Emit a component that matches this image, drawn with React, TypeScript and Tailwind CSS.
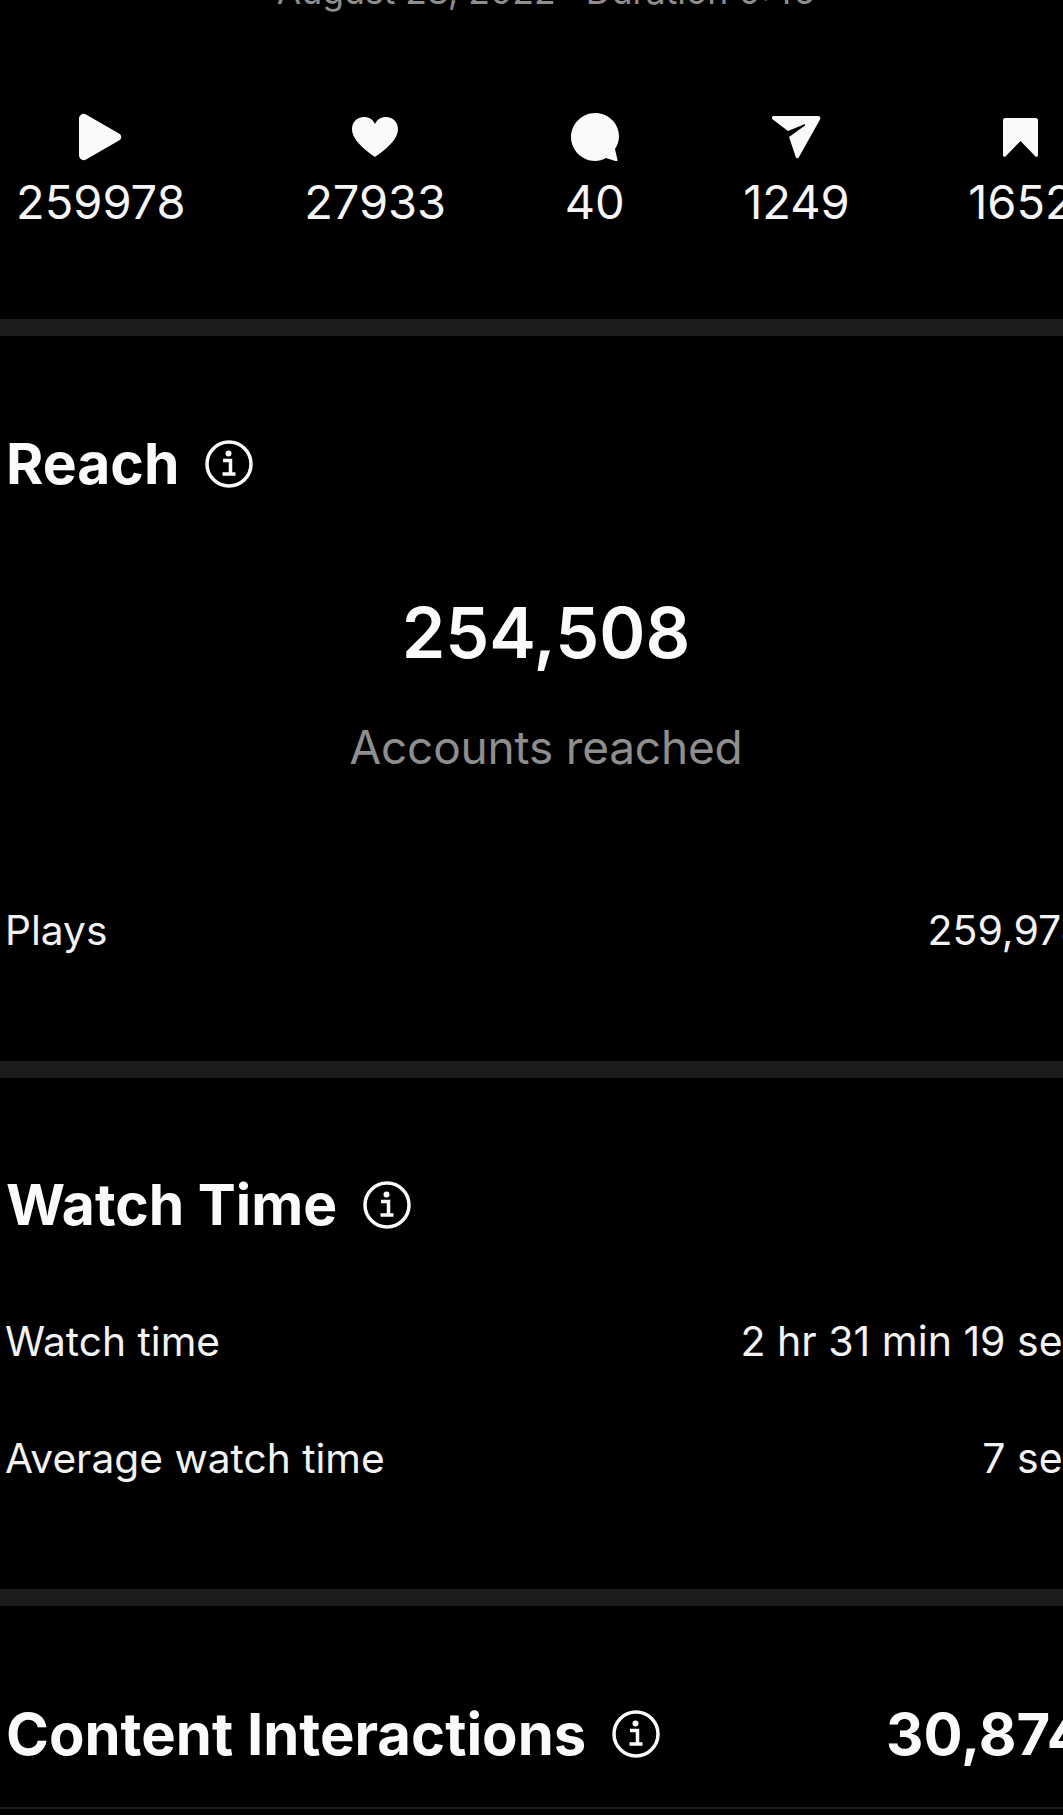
const font = { fontFamily: 'Inter, sans-serif' };

const PlayIcon = () => (
  <svg width="46" height="48" viewBox="0 0 46 48" fill="#fafafa">
    <path d="M1 6c0-4 4-6.500 7-4.500l33 19c3 1.800 3 5.200 0 7l-33 19c-3 2-7-.5-7-4.500z" />
  </svg>
);

const HeartIcon = () => (
  <svg width="48" height="42" viewBox="0 0 48 42" fill="#fafafa">
    <path d="M24 41C20 38 1 26 1 13 1 6 6 1 13 1c5 0 9 2.500 11 7 2-4.500 6-7 11-7 7 0 12 5 12 12 0 13-19 25-23 28z" />
  </svg>
);

const CommentIcon = () => (
  <svg width="48" height="48" viewBox="0 0 48 48" fill="#fafafa">
    <path d="M24 0c13 0 24 10 24 23 0 5-1.500 9-4 13l2.500 11c.2 1-.5 1.500-1.500 1.200l-10-3.200c-3.500 2-7 3-11 3C11 48 0 37 0 24S11 0 24 0z" />
  </svg>
);

const SendIcon = () => (
  <svg width="49" height="43" viewBox="0 0 49 43" fill="#fafafa">
    <path d="M2 0h44c2 0 3 1.500 2 3.500L27 41c-1 2-3 1.700-3.300-.3L17 21 33 9.500 33 8 16 15 .8 3.500C-.8 2 0 0 2 0z" />
  </svg>
);

const BookmarkIcon = () => (
  <svg width="35" height="39" viewBox="0 0 35 39" fill="#fafafa">
    <path d="M2 0h31c1 0 2 1 2 2v35c0 2-2 2.500-3 1L17.500 23 3 38c-1 1.500-3 1-3-1V2c0-1 1-2 2-2z" />
  </svg>
);

const InfoIcon = () => (
  <svg width="48" height="48" viewBox="0 0 48 48" fill="none" className="shrink-0">
    <circle cx="24" cy="24" r="22" stroke="#fafafa" strokeWidth="3.500" />
    <circle cx="23.500" cy="13.500" r="3" fill="#fafafa" />
    <path d="M18 20.500h7.500V33M17.500 34h13" stroke="#fafafa" strokeWidth="3.500" />
  </svg>
);

const stats = [
  { icon: <PlayIcon />, value: '259978' },
  { icon: <HeartIcon />, value: '27933' },
  { icon: <CommentIcon />, value: '40' },
  { icon: <SendIcon />, value: '1249' },
  { icon: <BookmarkIcon />, value: '1652' },
];

const Divider = () => <div className="h-[17px] bg-[#1c1c1c]" />;

const Row = ({ label, value }: { label: string; value: string }) => (
  <div className="-ml-px flex items-baseline justify-between leading-[48px] text-[#f2f2f2]">
    <span className="text-[40.7px]">{label}</span>
    <span className="text-[41px]">{value}</span>
  </div>
);

const Heading = ({ title, size }: { title: string; size: string }) => (
  <div className="flex items-center gap-[26px]">
    <h2 className={`${size} leading-[68px] font-bold text-[#fafafa]`}>{title}</h2>
    <InfoIcon />
  </div>
);

export default function App() {
  return (
    <div className="h-[1815px] w-[1063px] overflow-hidden bg-black" style={font}>
      <div className="w-[1092px]">
        <div className="-mt-[30px] text-center text-[35.5px] leading-[44px] text-[#8e8e8e]">
          August 28, 2022 · Duration 0:45
        </div>

        <div className="mt-[99px] flex gap-[118.5px] pl-[16px] text-[#f5f5f5]">
          {stats.map((s) => (
            <div key={s.value} className="flex shrink-0 flex-col items-center">
              <div className="flex h-[48px] items-center">{s.icon}</div>
              <div className="mt-[14px] text-[47px] leading-[54px]">{s.value}</div>
            </div>
          ))}
        </div>

        <div className="mt-[90px]">
          <Divider />
        </div>

        <section className="px-[6px] pt-[94px] pb-[106px]">
          <Heading title="Reach" size="text-[57px]" />
          <div className="mt-[93px] text-center">
            <div className="text-[70px] leading-[84px] font-semibold text-[#fafafa]">254,508</div>
            <div className="mt-[44px] text-[46px] leading-[56px] tracking-[-0.2px] text-[#8e8e8e]">Accounts reached</div>
          </div>
          <div className="mt-[131px]">
            <Row label="Plays" value="259,978" />
          </div>
        </section>

        <Divider />

        <section className="px-[6px] pt-[93px] pb-[106px]">
          <Heading title="Watch Time" size="text-[57px]" />
          <div className="mt-[78px] flex flex-col gap-[68px]">
            <Row label="Watch time" value="2 hr 31 min 19 sec" />
            <Row label="Average watch time" value="7 sec" />
          </div>
        </section>

        <Divider />

        <section className="flex items-center justify-between px-[6px] pt-[94px]">
          <Heading title="Content Interactions" size="text-[58px]" />
          <span className="text-[58px] leading-[68px] font-bold text-[#fafafa]">30,874</span>
        </section>
        <div className="mt-[39px] h-[2px] bg-[#1c1c1c]" />
      </div>
    </div>
  );
}
